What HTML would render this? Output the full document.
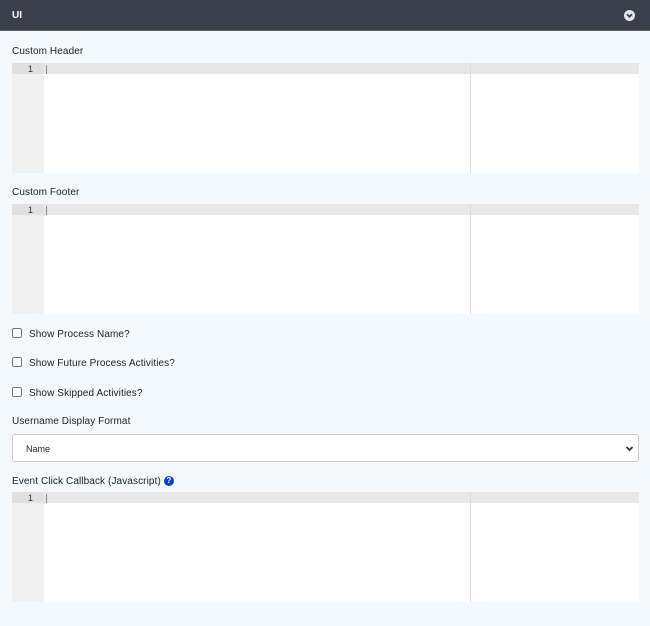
<!DOCTYPE html>
<html><head><style>
*{box-sizing:border-box;margin:0;padding:0}
body{width:650px;height:626px;background:#f4f9ff;font-family:"Liberation Sans",sans-serif;font-size:10px;color:#212529;position:relative;overflow:hidden}
.hdr{position:absolute;left:0;top:0;width:650px;height:31px;background:#394049;border-bottom:1px solid #5a6068}
.hdr b{position:absolute;left:12px;top:10px;color:#fff;font-size:10px}
.tog{position:absolute;left:624px;top:10px;width:11px;height:11px;border-radius:50%;background:#dfe6ee}
.lbl{position:absolute;left:12px;font-size:10px;color:#222;letter-spacing:0.1px}
.ed{position:absolute;left:12px;width:627px;height:110px;background:#fff}
.ed .g{position:absolute;left:0;top:0;width:32px;height:110px;background:#f0f0f0}
.ed .al{position:absolute;left:0;top:0;width:627px;height:11px;background:#e8e8e8}
.ed .n{position:absolute;left:16px;top:1px;font-size:9px;color:#333}
.ed .c{position:absolute;left:34px;top:2px;width:1px;height:9px;background:#888}
.ed .v{position:absolute;left:458px;top:0;width:1px;height:110px;background:#ddd}
.cb{position:absolute;left:12px;width:10px;height:10px;border:1px solid #777;border-radius:2px;background:#fff}
.sel{position:absolute;left:12px;top:434px;width:627px;height:28px;background:#fff;border:1px solid #ccc;border-radius:3px}
.sel span{position:absolute;left:13px;top:9px;font-size:9px}
.q{position:absolute;left:164px;top:476px;width:10px;height:10px;border-radius:50%;background:#0a3fd6;color:#fff;font-size:8px;font-weight:bold;text-align:center;line-height:10px}
</style></head><body>
<div class="hdr"><b>UI</b><div class="tog"><svg width="11" height="11" viewBox="0 0 11 11"><path d="M3 4.2 L5.5 6.7 L8 4.2" stroke="#394049" stroke-width="1.8" fill="none"/></svg></div></div>
<div class="lbl" style="top:46px">Custom Header</div>
<div class="ed" style="top:63px"><div class="g"></div><div class="al"></div><div class="g" style="height:11px;background:#e0e0e0"></div><div class="n">1</div><div class="c"></div><div class="v"></div></div>
<div class="lbl" style="top:187px">Custom Footer</div>
<div class="ed" style="top:204px"><div class="g"></div><div class="al"></div><div class="g" style="height:11px;background:#e0e0e0"></div><div class="n">1</div><div class="c"></div><div class="v"></div></div>
<div class="cb" style="top:328px"></div><div class="lbl" style="left:29px;top:329px">Show Process Name?</div>
<div class="cb" style="top:357px"></div><div class="lbl" style="left:29px;top:358px">Show Future Process Activities?</div>
<div class="cb" style="top:387px"></div><div class="lbl" style="left:29px;top:388px">Show Skipped Activities?</div>
<div class="lbl" style="top:416px">Username Display Format</div>
<div class="sel"><span>Name</span><svg style="position:absolute;right:4px;top:9px" width="9" height="9" viewBox="0 0 9 9"><path d="M1.5 3 L4.5 6 L7.5 3" stroke="#333" stroke-width="1.8" fill="none"/></svg></div>
<div class="lbl" style="top:476px">Event Click Callback (Javascript)</div>
<div class="q">?</div>
<div class="ed" style="top:492px"><div class="g"></div><div class="al"></div><div class="g" style="height:11px;background:#e0e0e0"></div><div class="n">1</div><div class="c"></div><div class="v"></div></div>
</body></html>
